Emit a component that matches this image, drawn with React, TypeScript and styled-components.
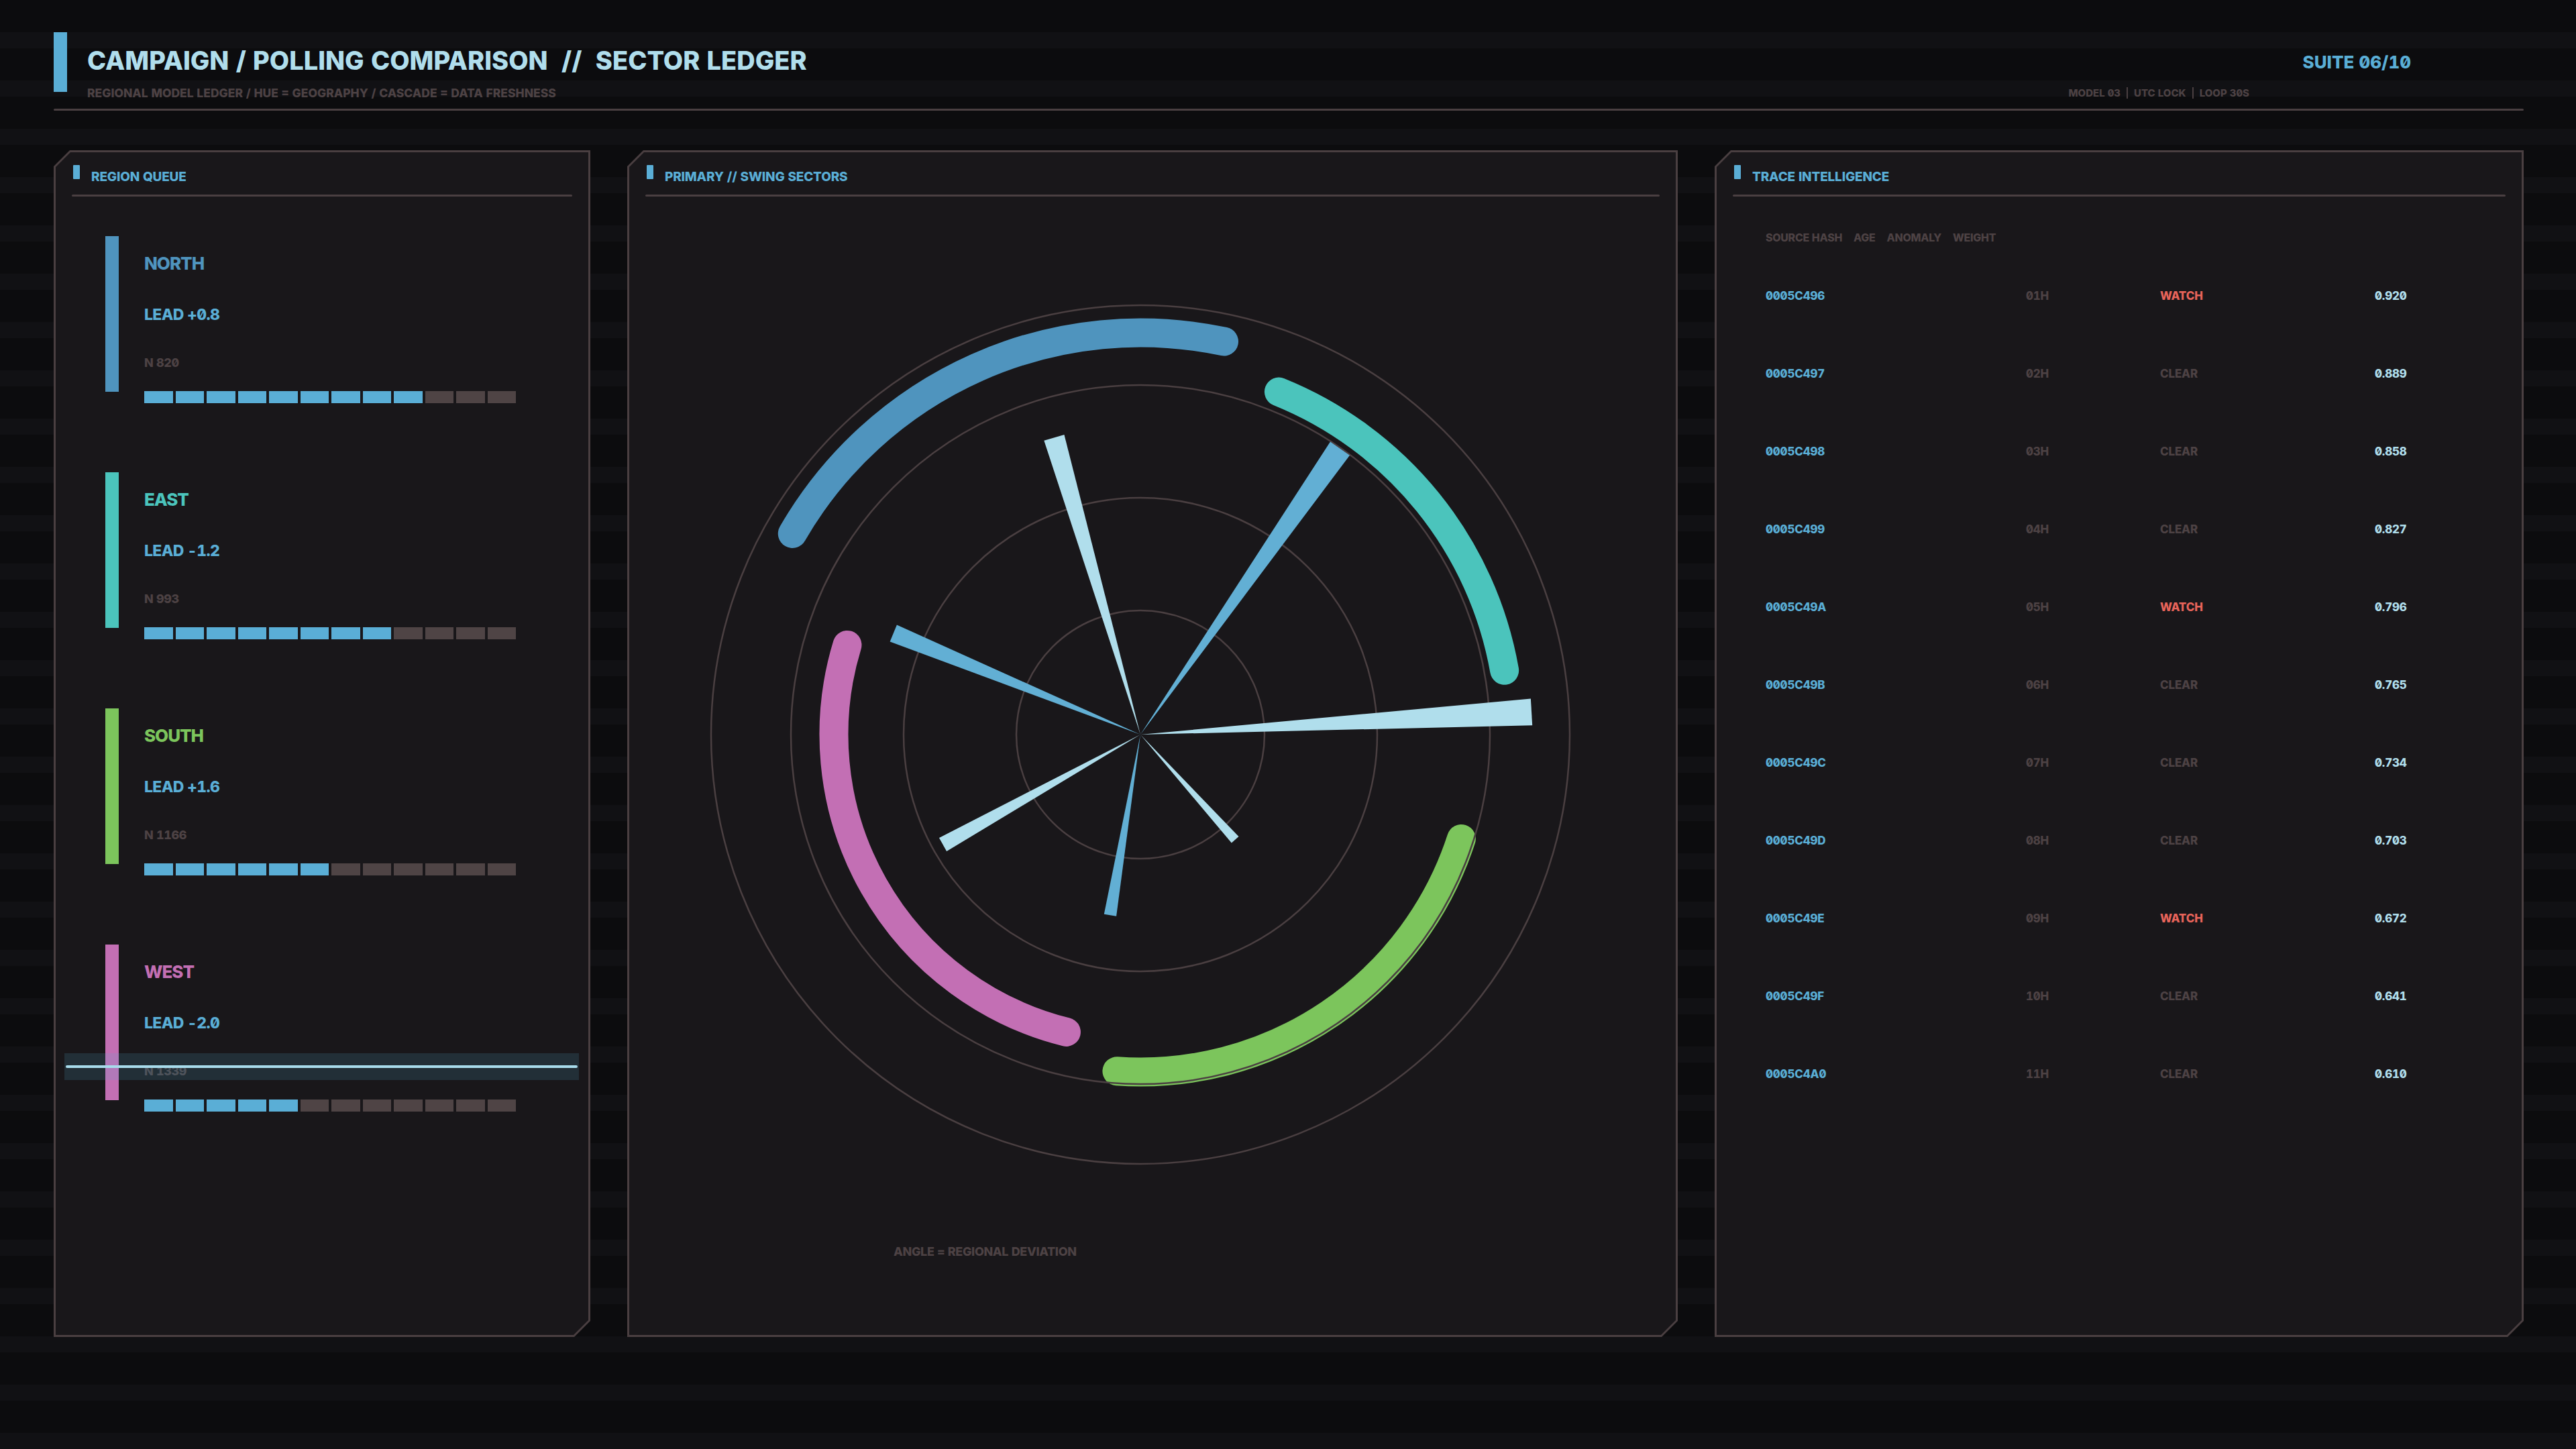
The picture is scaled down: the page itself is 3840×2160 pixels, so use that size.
import React from "react";
import styled, { createGlobalStyle } from "styled-components";

const C = {
  page: "#0c0c0e",
  band: "#111114",
  panel: "#19171a",
  line: "#4a3f41",
  dim: "#4d4244",
  empty: "#4f4445",
  ice: "#b0deec",
  sky: "#5aaed6",
  spike: "#62afd4",
  north: "#4f94be",
  east: "#4bc4bc",
  south: "#7cc55c",
  west: "#c36fb4",
  alert: "#e8645a",
};

const GlobalStyle = createGlobalStyle`
  html, body {
    margin: 0;
    padding: 0;
    background: repeating-linear-gradient(
      to bottom,
      ${C.page} 0 48px,
      ${C.band} 48px 72px
    );
    font-family: Inter, Roboto, "Liberation Sans", sans-serif;
    font-feature-settings: "zero" 1, "tnum" 1;
  }
`;

interface Region {
  name: string;
  color: string;
  lead: string;
  n: number;
  filled: number;
}

const regions: Region[] = [
  { name: "NORTH", color: C.north, lead: "LEAD +0.8", n: 820, filled: 9 },
  { name: "EAST", color: C.east, lead: "LEAD -1.2", n: 993, filled: 8 },
  { name: "SOUTH", color: C.south, lead: "LEAD +1.6", n: 1166, filled: 6 },
  { name: "WEST", color: C.west, lead: "LEAD -2.0", n: 1339, filled: 5 },
];

const traces = [
  ["0005C496", "01H", "WATCH", "0.920"],
  ["0005C497", "02H", "CLEAR", "0.889"],
  ["0005C498", "03H", "CLEAR", "0.858"],
  ["0005C499", "04H", "CLEAR", "0.827"],
  ["0005C49A", "05H", "WATCH", "0.796"],
  ["0005C49B", "06H", "CLEAR", "0.765"],
  ["0005C49C", "07H", "CLEAR", "0.734"],
  ["0005C49D", "08H", "CLEAR", "0.703"],
  ["0005C49E", "09H", "WATCH", "0.672"],
  ["0005C49F", "10H", "CLEAR", "0.641"],
  ["0005C4A0", "11H", "CLEAR", "0.610"],
];

// compass angles: 0 = up, clockwise
const arcs = [
  { r: 599, from: -60, to: 12, color: C.north },
  { r: 551, from: 22, to: 80, color: C.east },
  { r: 503, from: 108, to: 184, color: C.south },
  { r: 457, from: 194, to: 287, color: C.west },
];

const rings = [640, 521, 353, 185];

const spikes = [
  { r: 461, deg: 343.8, light: true },
  { r: 520, deg: 34.9, light: false },
  { r: 584, deg: 86.7, light: true },
  { r: 211, deg: 138, light: true },
  { r: 273, deg: 189.5, light: false },
  { r: 337, deg: 240.9, light: true },
  { r: 398, deg: 292.3, light: false },
];

const pt = (r: number, deg: number): [number, number] => {
  const a = (deg * Math.PI) / 180;
  return [r * Math.sin(a), -r * Math.cos(a)];
};

const arcPath = (r: number, a1: number, a2: number) => {
  const [x1, y1] = pt(r, a1);
  const [x2, y2] = pt(r, a2);
  const large = a2 - a1 > 180 ? 1 : 0;
  return `M ${x1} ${y1} A ${r} ${r} 0 ${large} 1 ${x2} ${y2}`;
};

const spikePath = (r: number, deg: number) => {
  const w = r * 0.068;
  const [tx, ty] = pt(r, deg);
  const [px, py] = pt(w / 2, deg + 90);
  return `M 0 0 L ${tx + px} ${ty + py} L ${tx - px} ${ty - py} Z`;
};

const SwingChart: React.FC = () => (
  <ChartSvg viewBox="-660 -660 1320 1320" width={1320} height={1320}>
    {arcs.map((a) => (
      <path
        key={a.color}
        d={arcPath(a.r, a.from, a.to)}
        fill="none"
        stroke={a.color}
        strokeWidth={43}
        strokeLinecap="round"
      />
    ))}
    {rings.map((r) => (
      <circle key={r} r={r} fill="none" stroke={C.line} strokeWidth={2.5} />
    ))}
    {spikes.map((s) => (
      <path key={s.deg} d={spikePath(s.r, s.deg)} fill={s.light ? C.ice : C.spike} />
    ))}
  </ChartSvg>
);

const Panel: React.FC<{ title: string; width: number; children?: React.ReactNode }> = ({
  title,
  width,
  children,
}) => (
  <PanelFrame $w={width}>
    <PanelBody>
      <PanelHeader>
        <Marker />
        <PanelTitle>{title}</PanelTitle>
      </PanelHeader>
      <Rule />
      {children}
    </PanelBody>
  </PanelFrame>
);

export default function App() {
  return (
    <>
      <GlobalStyle />
      <Page>
        <Masthead>
          <AccentBar />
          <TitleBlock>
            <Title>{"CAMPAIGN / POLLING COMPARISON  //  SECTOR LEDGER"}</Title>
            <Subtitle>REGIONAL MODEL LEDGER / HUE = GEOGRAPHY / CASCADE = DATA FRESHNESS</Subtitle>
          </TitleBlock>
          <HeaderSide>
            <Suite>SUITE 06/10</Suite>
            <MetaLine>
              <MetaItem>MODEL 03</MetaItem>
              <MetaItem $sep>UTC LOCK</MetaItem>
              <MetaItem $sep>LOOP 30S</MetaItem>
            </MetaLine>
          </HeaderSide>
        </Masthead>
        <Rule />

        <PanelRow>
          <Panel title="REGION QUEUE" width={800}>
            <RegionList>
              {regions.map((r) => (
                <RegionRow key={r.name}>
                  <ColorBar $c={r.color} />
                  <RegionInfo>
                    <RegionName $c={r.color}>{r.name}</RegionName>
                    <Lead>{r.lead}</Lead>
                    <Sample>N {r.n}</Sample>
                    <Segments>
                      {Array.from({ length: 12 }).map((_, i) => (
                        <Segment key={i} $on={i < r.filled} />
                      ))}
                    </Segments>
                  </RegionInfo>
                </RegionRow>
              ))}
            </RegionList>
            <ScanBand>
              <ScanLine />
            </ScanBand>
          </Panel>

          <Panel title="PRIMARY // SWING SECTORS" width={1566}>
            <SwingChart />
            <ChartCaption>ANGLE = REGIONAL DEVIATION</ChartCaption>
          </Panel>

          <Panel title="TRACE INTELLIGENCE" width={1206}>
            <TraceTable>
              <TraceHead>
                <span>SOURCE HASH</span>
                <span>AGE</span>
                <span>ANOMALY</span>
                <span>WEIGHT</span>
              </TraceHead>
              <TraceRows>
                {traces.map(([hash, age, status, weight]) => (
                  <TraceRow key={hash}>
                    <Hash>{hash}</Hash>
                    <Age>{age}</Age>
                    <Status $alert={status === "WATCH"}>{status}</Status>
                    <Weight>{weight}</Weight>
                  </TraceRow>
                ))}
              </TraceRows>
            </TraceTable>
          </Panel>
        </PanelRow>
      </Page>
    </>
  );
}

const Page = styled.div`
  width: 3840px;
  height: 2160px;
  box-sizing: border-box;
  padding: 48px 78px 0 80px;
  display: flex;
  flex-direction: column;
  font-weight: 800;
`;

const Masthead = styled.header`
  display: flex;
  height: 114px;
`;

const AccentBar = styled.div`
  width: 20px;
  height: 89px;
  background: ${C.sky};
`;

const TitleBlock = styled.div`
  flex: 1;
  display: flex;
  flex-direction: column;
  padding: 23px 0 0 30px;
`;

const Title = styled.h1`
  margin: 0;
  font-size: 38px;
  line-height: 1;
  font-weight: 800;
  color: ${C.ice};
  white-space: pre;
`;

const Subtitle = styled.div`
  margin-top: 21px;
  font-size: 17.5px;
  line-height: 1;
  color: ${C.dim};
`;

const HeaderSide = styled.div`
  display: flex;
  flex-direction: column;
  align-items: flex-end;
  padding: 32px 168px 0 0;
`;

const Suite = styled.div`
  font-size: 26px;
  line-height: 1;
  color: ${C.sky};
`;

const MetaLine = styled.div`
  display: flex;
  align-items: center;
  margin: 24px 241px 0 0;
  font-size: 15px;
  line-height: 1;
  color: ${C.dim};
`;

const MetaItem = styled.span<{ $sep?: boolean }>`
  padding-left: ${(p) => (p.$sep ? 9 : 0)}px;
  margin-left: ${(p) => (p.$sep ? 9 : 0)}px;
  border-left: ${(p) => (p.$sep ? `2px solid ${C.line}` : "none")};
  line-height: 17px;
`;

const Rule = styled.div`
  height: 3px;
  flex-shrink: 0;
  background: ${C.line};
  border-radius: 2px;
`;

const PanelRow = styled.main`
  display: flex;
  gap: 55px;
  margin-top: 59px;
`;

const PanelFrame = styled.section<{ $w: number }>`
  width: ${(p) => p.$w}px;
  height: 1769px;
  box-sizing: border-box;
  padding: 3px;
  display: flex;
  background: ${C.line};
  clip-path: polygon(
    24px 0,
    100% 0,
    100% calc(100% - 24px),
    calc(100% - 24px) 100%,
    0 100%,
    0 24px
  );
`;

const PanelBody = styled.div`
  flex: 1;
  position: relative;
  display: flex;
  flex-direction: column;
  padding: 19px 24px 0;
  background: ${C.panel};
  clip-path: polygon(
    22px 0,
    100% 0,
    100% calc(100% - 22px),
    calc(100% - 22px) 100%,
    0 100%,
    0 22px
  );
`;

const PanelHeader = styled.div`
  display: flex;
  align-items: flex-start;
  gap: 17px;
  height: 44px;
  padding-left: 2px;
`;

const Marker = styled.div`
  width: 10px;
  height: 21px;
  border-radius: 1px;
  background: ${C.sky};
`;

const PanelTitle = styled.h2`
  margin: 8px 0 0;
  font-size: 19px;
  line-height: 1;
  font-weight: 800;
  letter-spacing: -0.01em;
  color: ${C.sky};
`;

const RegionList = styled.div`
  display: flex;
  flex-direction: column;
  gap: 103px;
  padding: 59px 0 0 50px;
`;

const RegionRow = styled.div`
  display: grid;
  grid-template-columns: 20px 1fr;
  column-gap: 38px;
  height: 249px;
`;

const ColorBar = styled.div<{ $c: string }>`
  height: 232px;
  background: ${(p) => p.$c};
`;

const RegionInfo = styled.div`
  display: flex;
  flex-direction: column;
`;

const RegionName = styled.div<{ $c: string }>`
  margin-top: 28px;
  font-size: 26px;
  line-height: 1;
  letter-spacing: -0.04em;
  color: ${(p) => p.$c};
`;

const Lead = styled.div`
  margin-top: 52px;
  font-size: 23px;
  line-height: 1;
  letter-spacing: -0.03em;
  color: ${C.sky};
`;

const Sample = styled.div`
  margin-top: 51px;
  font-size: 18px;
  line-height: 1;
  letter-spacing: -0.02em;
  color: ${C.dim};
`;

const Segments = styled.div`
  display: flex;
  gap: 4px;
  margin-top: 33px;
`;

const Segment = styled.div<{ $on: boolean }>`
  width: 42.5px;
  height: 18px;
  background: ${(p) => (p.$on ? C.sky : C.empty)};
`;

const ScanBand = styled.div`
  position: absolute;
  top: 1343px;
  left: 13px;
  width: 767px;
  height: 40px;
  display: flex;
  align-items: center;
  background: rgba(90, 174, 214, 0.16);
`;

const ScanLine = styled.div`
  flex: 1;
  height: 4px;
  margin: 0 2px;
  border-radius: 2px;
  background: #a8dcec;
`;

const ChartSvg = styled.svg`
  display: block;
  margin: 142px 0 0 78px;
`;

const ChartCaption = styled.div`
  margin: 102px 0 0 370px;
  font-size: 18px;
  line-height: 1;
  letter-spacing: -0.02em;
  color: ${C.dim};
`;

const TraceTable = styled.div`
  display: flex;
  flex-direction: column;
  padding: 53px 0 0 49px;
`;

const TraceHead = styled.div`
  display: flex;
  gap: 17px;
  font-size: 16px;
  line-height: 1;
  letter-spacing: -0.02em;
  color: ${C.dim};
`;

const TraceRows = styled.div`
  display: flex;
  flex-direction: column;
  margin-top: 21px;
`;

const TraceRow = styled.div`
  display: grid;
  grid-template-columns: 388px 200px 320px 1fr;
  align-items: center;
  height: 116px;
  font-size: 17px;
  line-height: 1;
  letter-spacing: -0.01em;
`;

const Hash = styled.span`
  color: ${C.sky};
`;

const Age = styled.span`
  color: ${C.dim};
`;

const Status = styled.span<{ $alert: boolean }>`
  color: ${(p) => (p.$alert ? C.alert : C.dim)};
`;

const Weight = styled.span`
  color: ${C.ice};
`;
